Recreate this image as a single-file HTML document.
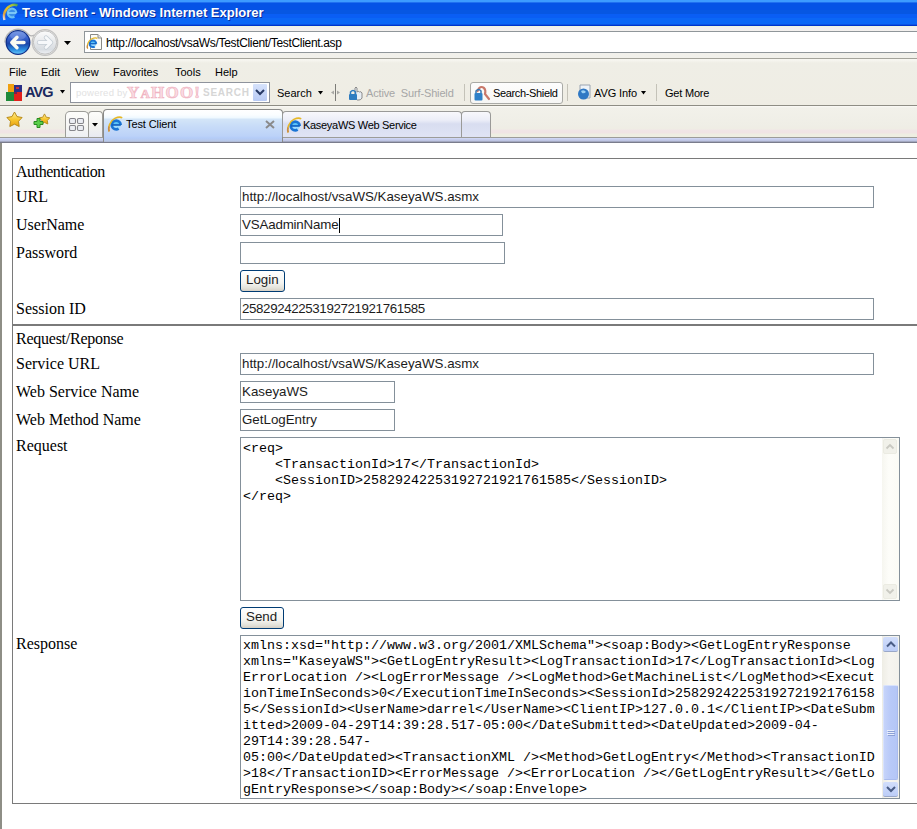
<!DOCTYPE html>
<html><head><meta charset="utf-8">
<style>
*{box-sizing:border-box}
html,body{margin:0;padding:0}
body{width:917px;height:829px;overflow:hidden;position:relative;background:#fff;font-family:"Liberation Sans",sans-serif}
.a{position:absolute}
.t{position:absolute;white-space:pre;line-height:1}
#title{left:0;top:0;width:917px;height:26px;background:linear-gradient(to bottom,#3d9bff 0px,#3d9bff 2px,#2070f0 2px,#2070f0 3px,#0553e6 3px,#0553e6 10px,#0757e2 10px,#0757e2 14px,#0a5ef4 14px,#0a5ef4 18px,#0b67f6 18px,#0b67f6 24px,#0a54e4 24px,#0a54e4 25px,#0034cc 25px,#0034cc 26px)}
#addr{left:0;top:26px;width:917px;height:32px;background:linear-gradient(to bottom,#eef6e0 0px,#eef6e0 1px,#f4eef0 1px,#f3f1ee 5px,#f1f0ea 31px)}
#tool{left:0;top:58px;width:917px;height:48px;background:linear-gradient(to bottom,#f7f6f0 1px,#efeee6 4px,#efede4);border-top:1px solid #a4a39a;border-bottom:1px solid #8e8d84}
#tabs{left:0;top:106px;width:917px;height:37px;background:linear-gradient(to bottom,#fbfaf6 0px,#f2f1ea 2px,#efeee6 20px,#efede4 23px,#f0e6e6 24px,#f0e4e4 27px,#eeeee2 28px,#eeeee2 31px)}
#page{left:0;top:143px;width:917px;height:686px;background:#fff}
.menu{font-size:11px;color:#000;top:67px}
.tb{font-size:11px;color:#000}
.lbl{font-family:"Liberation Serif",serif;font-size:16px;color:#000;left:16px}
.inp{position:absolute;border:1px solid #84909a;background:#fff;height:22px}
.itx{position:absolute;font-size:13.33px;color:#1c1c1c;white-space:pre;line-height:1}
.btn{position:absolute;border:1px solid #003c74;border-radius:3px;background:linear-gradient(to bottom,#fff 0%,#f4f4f0 60%,#e3e2da 85%,#d6d0c5 100%);height:22px}
.mono{font-family:"Liberation Mono",monospace;font-size:13.33px;line-height:16px;white-space:pre;color:#000}
</style></head><body>
<svg width="0" height="0" style="position:absolute"><defs>
<symbol id="ie" viewBox="0 0 16 16">
 <circle cx="9.2" cy="9" r="4.6" fill="#9edcff"/>
 <path d="M4.6 9 A4.6 4.6 0 0 1 13.8 9 Z" fill="#5cc4f8"/>
 <circle cx="9.2" cy="9" r="4.4" fill="none" stroke="#1a74d4" stroke-width="2.8" stroke-dasharray="0 4.2 23.5 0"/>
 <rect x="4.6" y="8.1" width="9.2" height="1.7" fill="#1262c0"/>
 <path d="M2.2 15.4 C0.9 11.5 2.6 5 7.8 2.4 C11 0.9 14 1 15.2 2" fill="none" stroke="#e6b828" stroke-width="1.6"/>
 <path d="M2.2 15.4 C1.4 13.5 1.5 12 2.1 10.5" fill="none" stroke="#c88a48" stroke-width="1.6"/>
</symbol>
</defs></svg>

<!-- title bar -->
<div id="title" class="a"></div>
<svg class="a" style="left:2px;top:3px" width="17" height="18" viewBox="0 0 17 18">
  <defs><linearGradient id="sw" x1="0" y1="1" x2="1" y2="0"><stop offset="0" stop-color="#e8e0f0"/><stop offset="0.2" stop-color="#e0a040"/><stop offset="0.5" stop-color="#e8c020"/><stop offset="0.8" stop-color="#a0c040"/><stop offset="1" stop-color="#40a060"/></linearGradient></defs>
  <circle cx="10" cy="10" r="3.8" fill="#3a8ee8"/>
  <circle cx="10" cy="10" r="4.3" fill="none" stroke="#6cc0f4" stroke-width="2.2" stroke-dasharray="0 4 23 0"/>
  <rect x="5.6" y="9.2" width="8.8" height="1.6" fill="#8ad4fa"/>
  <path d="M2.5 17 C1 12 2.5 6 8 3 C11 1.5 14 1.5 15.5 2.5" fill="none" stroke="url(#sw)" stroke-width="2.4"/>
</svg>
<div class="t" style="left:22px;top:6px;font-size:13px;font-weight:bold;color:#fff;text-shadow:1px 1px 0 #0a2a9a">Test Client - Windows Internet Explorer</div>

<!-- address band -->
<div id="addr" class="a"></div>
<svg class="a" style="left:0px;top:26px" width="64" height="32" viewBox="0 0 64 32">
  <defs>
    <linearGradient id="gb" x1="0" y1="0" x2="0" y2="1"><stop offset="0" stop-color="#5a82e0"/><stop offset="0.3" stop-color="#3a64d0"/><stop offset="0.55" stop-color="#1c44a8"/><stop offset="0.8" stop-color="#2a8ce0"/><stop offset="1" stop-color="#68c8fa"/></linearGradient>
    <linearGradient id="gg" x1="0" y1="0" x2="0" y2="1"><stop offset="0" stop-color="#fcfcfc"/><stop offset="0.5" stop-color="#e6e8ea"/><stop offset="0.8" stop-color="#d8dde2"/><stop offset="1" stop-color="#f0f2f4"/></linearGradient>
  </defs>
  <path d="M4.8 16.5 A13.2 13.2 0 0 1 28.8 8.9 Q31.5 10.8 34.4 9" fill="none" stroke="#b4b4b4" stroke-width="1.3"/>
  <circle cx="45" cy="16.5" r="12.8" fill="none" stroke="#c2c2c2" stroke-width="1.2"/>
  <circle cx="45" cy="16.5" r="11.6" fill="url(#gg)" stroke="#b4b4b4" stroke-width="0.8"/>
  <path d="M39 16.5 L50.5 16.5 M46 11.5 L51 16.5 L46 21.5" fill="none" stroke="#c4ccd4" stroke-width="4.4" stroke-linecap="round" stroke-linejoin="round"/>
  <path d="M39 16.5 L50.5 16.5 M46 11.5 L51 16.5 L46 21.5" fill="none" stroke="#f6f8fa" stroke-width="2.8" stroke-linecap="round" stroke-linejoin="round"/>
  <circle cx="18" cy="16.5" r="11.8" fill="url(#gb)" stroke="#10308a" stroke-width="1.3"/>
  <ellipse cx="18" cy="9.5" rx="8" ry="4.5" fill="#ffffff" opacity="0.18"/>
  <path d="M12 16.5 L24 16.5 M17 11.2 L11.8 16.5 L17 21.8" fill="none" stroke="#fbfbf2" stroke-width="3.4" stroke-linecap="round" stroke-linejoin="round"/>
</svg>
<svg class="a" style="left:64px;top:41px" width="8" height="5"><path d="M0 0 L7 0 L3.5 4Z" fill="#000"/></svg>
<div class="a" style="left:84px;top:31px;width:833px;height:22px;border:1px solid #90969a;border-right:none;background:#fff"></div>
<svg class="a" style="left:88px;top:34px" width="14" height="16" viewBox="0 0 14 16">
  <path d="M2.5 0.5 L10 0.5 L13.5 4 L13.5 15.5 L2.5 15.5Z" fill="#fbfbf8" stroke="#8a8a86" stroke-width="1"/>
  <path d="M10 0.5 L10 4 L13.5 4" fill="#e8e8e4" stroke="#8a8a86" stroke-width="1"/>
</svg>
<svg class="a" style="left:86px;top:37px" width="12" height="12" viewBox="0 0 16 16"><use href="#ie"/></svg>
<div class="t" style="left:106px;top:37px;font-size:12px;color:#000;letter-spacing:-0.33px">http://localhost/vsaWs/TestClient/TestClient.asp</div>

<!-- toolbar: menu + AVG -->
<div id="tool" class="a"></div>
<div class="t menu" style="left:9px">File</div>
<div class="t menu" style="left:41px">Edit</div>
<div class="t menu" style="left:75px">View</div>
<div class="t menu" style="left:113px">Favorites</div>
<div class="t menu" style="left:175px">Tools</div>
<div class="t menu" style="left:215px">Help</div>

<!-- AVG toolbar -->
<svg class="a" style="left:6px;top:84px" width="17" height="17" viewBox="0 0 17 17">
  <rect x="2" y="0" width="6" height="8" fill="#f0a010"/>
  <rect x="0" y="8" width="8" height="9" fill="#1f8a3a"/>
  <rect x="8" y="1" width="8" height="7" fill="#2a2f86"/>
  <rect x="10" y="3" width="3" height="2" fill="#c03040"/>
  <rect x="8" y="8" width="8" height="9" fill="#e0201c"/>
  <rect x="8" y="8" width="3" height="2" fill="#7a2050"/>
</svg>
<div class="t" style="left:25px;top:85px;font-size:14.5px;font-weight:bold;color:#1b2a5e;letter-spacing:-0.9px">AVG</div>
<svg class="a" style="left:60px;top:90px" width="6" height="4"><path d="M0 0 L5 0 L2.5 3.5Z" fill="#000"/></svg>
<div class="a" style="left:70px;top:82px;width:200px;height:21px;border:1px solid #8e939c;background:#fff"></div>
<div class="t" style="left:76px;top:88px;font-size:9.5px;color:#e2e2e2;letter-spacing:0.25px">powered by</div>
<div class="t" style="left:127px;top:84px;font-family:'Liberation Serif',serif;font-size:17px;font-weight:bold;color:#fadce4;-webkit-text-stroke:0.7px #f0b4c2;letter-spacing:1.2px">Y<span style='font-size:13px'>A</span>HOO!</div>
<div class="t" style="left:203px;top:88px;font-size:10px;font-weight:bold;color:#d6d6d6;letter-spacing:0.75px">SEARCH</div>
<div class="a" style="left:253px;top:84px;width:14px;height:17px;background:linear-gradient(to bottom,#d6e2fb,#b9cbf5);border-radius:1px"></div>
<svg class="a" style="left:255px;top:89px" width="10" height="7"><path d="M1 1 L5 5 L9 1" fill="none" stroke="#283a66" stroke-width="2"/></svg>
<div class="t tb" style="left:277px;top:88px">Search</div>
<svg class="a" style="left:318px;top:91px" width="6" height="4"><path d="M0 0 L5 0 L2.5 3.5Z" fill="#000"/></svg>
<svg class="a" style="left:330px;top:84px" width="10" height="17">
  <rect x="5" y="0" width="1" height="17" fill="#7c7c78"/>
  <path d="M1 8.5 L4 6.5 L4 10.5Z" fill="#a8a8a4"/><path d="M10 8.5 L7 6.5 L7 10.5Z" fill="#a8a8a4"/>
</svg>
<svg class="a" style="left:347px;top:84px" width="17" height="17" viewBox="0 0 17 17">
  <path d="M8 14 L8 4 Q9 2 10 4 L10 8 Q11 6.5 12.5 8 Q14 7 15 9 L15 14 Q14 16 12 16 L10 16 Z" fill="#e8eef4" stroke="#8a8a8a" stroke-width="1"/>
  <rect x="2" y="10" width="8" height="6" rx="1" fill="#2e7cc0"/>
  <path d="M3.5 10 L3.5 8 Q6 5 8.5 8 L8.5 10" fill="none" stroke="#2e7cc0" stroke-width="1.5"/>
</svg>
<div class="t tb" style="left:366px;top:88px;color:#a6a6a6;letter-spacing:-0.15px">Active  Surf-Shield</div>
<div class="a" style="left:464px;top:84px;width:1px;height:17px;background:#c4c2b8"></div>
<div class="a" style="left:470px;top:82px;width:93px;height:22px;border:1px solid #a9aaa6;border-radius:3px;background:linear-gradient(to bottom,#fdfdfd,#f6f6f4)"></div>
<svg class="a" style="left:473px;top:85px" width="18" height="17" viewBox="0 0 18 17">
  <path d="M4.5 6 Q7 0 11 3 Q13 5 12 9 L16 14" fill="none" stroke="#c8786a" stroke-width="2.2" stroke-linecap="round"/>
  <rect x="1.5" y="8" width="8" height="7.5" rx="1" fill="#2e80c8"/>
  <path d="M3 8 L3 6 Q5.5 3 8 6 L8 8" fill="none" stroke="#3a78b0" stroke-width="1.5"/>
</svg>
<div class="t tb" style="left:493px;top:88px;letter-spacing:-0.35px">Search-Shield</div>
<div class="a" style="left:567px;top:84px;width:1px;height:17px;background:#c4c2b8"></div>
<svg class="a" style="left:576px;top:84px" width="16" height="17" viewBox="0 0 16 17">
  <path d="M4 1 L14 1 L14 14 L4 14Z" fill="#eef3f8" stroke="#9aa4b0" stroke-width="1"/>
  <circle cx="7.5" cy="10" r="5.5" fill="#2f78c4"/>
  <path d="M5 7 Q8 5 10 8 Q8 10 6 9Z" fill="#9ad0f4"/>
</svg>
<div class="t tb" style="left:594px;top:88px;letter-spacing:-0.1px">AVG Info</div>
<svg class="a" style="left:641px;top:91px" width="6" height="4"><path d="M0 0 L5 0 L2.5 3.5Z" fill="#000"/></svg>
<div class="a" style="left:656px;top:84px;width:1px;height:17px;background:#c4c2b8"></div>
<div class="t tb" style="left:665px;top:88px;letter-spacing:-0.2px">Get More</div>

<!-- tabs band -->
<div id="tabs" class="a"></div>

<!-- tabs -->
<div class="a" style="left:0;top:137px;width:917px;height:1px;background:#9c9c98"></div>
<div class="a" style="left:0;top:138px;width:917px;height:5px;background:linear-gradient(to bottom,#d4dcf8 0px,#c8d0f0 1px,#bcc2e0 3px,#8a8ea0 4px,#8a8ea0 5px)"></div>
<svg class="a" style="left:6px;top:111px" width="18" height="18" viewBox="0 0 18 18">
  <defs><linearGradient id="st" x1="0" y1="0" x2="0" y2="1"><stop offset="0" stop-color="#fff2a0"/><stop offset="0.5" stop-color="#f8c830"/><stop offset="1" stop-color="#e8a010"/></linearGradient></defs>
  <path d="M8.5 1.0 L11.0 5.6 L16.1 6.5 L12.5 10.3 L13.2 15.5 L8.5 13.2 L3.8 15.5 L4.5 10.3 L0.9 6.5 L6.0 5.6Z" fill="url(#st)" stroke="#b88a18" stroke-width="1" stroke-linejoin="round"/>
</svg>
<svg class="a" style="left:33px;top:112px" width="17" height="17" viewBox="0 0 17 17">
  <path d="M11.5 1.9 L13.2 5.2 L16.8 5.8 L14.3 8.4 L14.8 12.0 L11.5 10.4 L8.2 12.0 L8.7 8.4 L6.2 5.8 L9.8 5.2Z" fill="url(#st)" stroke="#b88a18" stroke-width="0.9" stroke-linejoin="round"/>
  <path d="M4 6.5 L7 6.5 L7 9.5 L10 9.5 L10 12.5 L7 12.5 L7 15.5 L4 15.5 L4 12.5 L1 12.5 L1 9.5 L4 9.5Z" fill="#5ad04a" stroke="#2a8a22" stroke-width="1" stroke-linejoin="round"/>
</svg>
<div class="a" style="left:65px;top:111px;width:24px;height:26px;border:1px solid #9c9c98;border-bottom:none;border-radius:5px 5px 0 0;background:linear-gradient(to bottom,#fdfdfb,#f6f6f4 60%,#eef0f4)"></div>
<div class="a" style="left:88px;top:111px;width:15px;height:26px;border:1px solid #9c9c98;border-bottom:none;border-radius:4px 4px 0 0;background:linear-gradient(to bottom,#fdfdfb,#f2f2f0 60%,#e8eaf2)"></div>
<svg class="a" style="left:68px;top:117px" width="17" height="15" viewBox="0 0 17 15">
  <rect x="1.5" y="1.5" width="6" height="5" rx="1.2" fill="#eceef4" stroke="#86868c" stroke-width="1.1"/>
  <rect x="9.5" y="1.5" width="6" height="5" rx="1.2" fill="#eceef4" stroke="#86868c" stroke-width="1.1"/>
  <rect x="1.5" y="8.5" width="6" height="5" rx="1.2" fill="#eceef4" stroke="#86868c" stroke-width="1.1"/>
  <rect x="9.5" y="8.5" width="6" height="5" rx="1.2" fill="#eceef4" stroke="#86868c" stroke-width="1.1"/>
</svg>
<svg class="a" style="left:92px;top:123px" width="7" height="4"><path d="M0 0 L6 0 L3 3.5Z" fill="#000"/></svg>
<div class="a" style="left:103px;top:109px;width:180px;height:33px;border:1px solid #8a8a88;border-bottom:none;border-radius:4px 4px 0 0;background:linear-gradient(to bottom,#ffffff 0px,#fafdff 5px,#eef8ff 8px,#d4e6f8 9px,#c8dcf8 16px,#bcd2f8 26px,#b4ccf8 28px,#b8c8e8 31px,#a8b0c8 32px)"></div>
<div class="a" style="left:0;top:142px;width:917px;height:1px;background:#7a7c8c"></div>
<svg class="a" style="left:107px;top:116px" width="16" height="16"><use href="#ie"/></svg>
<div class="t tb" style="left:126px;top:119px;letter-spacing:-0.1px">Test Client</div>
<svg class="a" style="left:265px;top:120px" width="10" height="9"><path d="M1 1 L9 8 M9 1 L1 8" stroke="#8a8a8a" stroke-width="2"/></svg>
<div class="a" style="left:282px;top:111px;width:180px;height:26px;border:1px solid #9a9a98;border-bottom:none;border-radius:4px 4px 0 0;background:linear-gradient(to bottom,#f8f8fc,#eceef8 8px,#d8ddf0 12px,#dfe3f4 24px)"></div>
<svg class="a" style="left:286px;top:117px" width="16" height="16"><use href="#ie"/></svg>
<div class="t tb" style="left:303px;top:120px;letter-spacing:-0.3px">KaseyaWS Web Service</div>
<div class="a" style="left:461px;top:111px;width:30px;height:26px;border:1px solid #9a9a98;border-bottom:none;border-radius:4px 4px 0 0;background:linear-gradient(to bottom,#f8f8fc,#eceef8 8px,#d8ddf0 12px,#dfe3f4 24px)"></div>

<!-- page -->
<div id="page" class="a"></div>
<div class="a" style="left:0;top:143px;width:2px;height:686px;background:#8e8e86"></div>

<!-- tables -->
<div class="a" style="left:12px;top:158px;width:910px;height:167px;border:1px solid #7a7a7a;border-right:none"></div>
<div class="a" style="left:12px;top:324px;width:910px;height:480px;border:1px solid #7a7a7a;border-right:none;border-top:2px solid #7a7a7a"></div>

<div class="t lbl" style="top:164px;letter-spacing:-0.45px">Authentication</div>
<div class="t lbl" style="top:189px">URL</div>
<div class="t lbl" style="top:217px">UserName</div>
<div class="t lbl" style="top:245px">Password</div>
<div class="t lbl" style="top:301px">Session ID</div>
<div class="t lbl" style="top:331px;letter-spacing:-0.25px">Request/Reponse</div>
<div class="t lbl" style="top:356px">Service URL</div>
<div class="t lbl" style="top:384px">Web Service Name</div>
<div class="t lbl" style="top:412px">Web Method Name</div>
<div class="t lbl" style="top:438px">Request</div>
<div class="t lbl" style="top:636px">Response</div>

<div class="inp" style="left:240px;top:186px;width:634px"></div>
<div class="itx" style="left:242px;top:190px">http://localhost/vsaWS/KaseyaWS.asmx</div>
<div class="inp" style="left:240px;top:214px;width:263px"></div>
<div class="itx" style="left:242px;top:218px;letter-spacing:-0.17px">VSAadminName</div>
<div class="a" style="left:339px;top:218px;width:1px;height:15px;background:#000"></div>
<div class="inp" style="left:240px;top:242px;width:265px"></div>
<div class="btn" style="left:240px;top:270px;width:45px"></div>
<div class="itx" style="left:246px;top:273px">Login</div>
<div class="inp" style="left:240px;top:298px;width:634px"></div>
<div class="itx" style="left:242px;top:302px;letter-spacing:-0.38px">25829242253192721921761585</div>

<div class="inp" style="left:240px;top:353px;width:634px"></div>
<div class="itx" style="left:242px;top:357px">http://localhost/vsaWS/KaseyaWS.asmx</div>
<div class="inp" style="left:240px;top:381px;width:155px"></div>
<div class="itx" style="left:242px;top:385px">KaseyaWS</div>
<div class="inp" style="left:240px;top:409px;width:155px"></div>
<div class="itx" style="left:242px;top:413px">GetLogEntry</div>

<div class="a" style="left:240px;top:437px;width:660px;height:164px;border:1px solid #84909a;background:#fff"></div>
<div class="a mono" style="left:243px;top:441px">&lt;req&gt;
    &lt;TransactionId&gt;17&lt;/TransactionId&gt;
    &lt;SessionID&gt;25829242253192721921761585&lt;/SessionID&gt;
&lt;/req&gt;</div>
<!-- request scrollbar (disabled) -->
<div class="a" style="left:882px;top:438px;width:17px;height:162px;background:linear-gradient(to right,#f6f6f0,#fdfdf9 40%,#fbfbf5)"></div>
<div class="a" style="left:883px;top:439px;width:14px;height:15px;border-radius:2px;background:#f1f1ea;border:1px solid #ebebe2"></div>
<svg class="a" style="left:885px;top:443px" width="10" height="7"><path d="M1.5 5.5 L5 2 L8.5 5.5" fill="none" stroke="#c9c9c2" stroke-width="1.8"/></svg>
<div class="a" style="left:883px;top:584px;width:14px;height:15px;border-radius:2px;background:#f1f1ea;border:1px solid #ebebe2"></div>
<svg class="a" style="left:885px;top:588px" width="10" height="7"><path d="M1.5 1.5 L5 5 L8.5 1.5" fill="none" stroke="#c9c9c2" stroke-width="1.8"/></svg>


<div class="btn" style="left:240px;top:607px;width:44px"></div>
<div class="itx" style="left:246px;top:610px">Send</div>

<div class="a" style="left:240px;top:635px;width:660px;height:164px;border:1px solid #84909a;background:#fff"></div>
<div class="a mono" style="left:243px;top:638px">xmlns:xsd="http://www.w3.org/2001/XMLSchema"&gt;&lt;soap:Body&gt;&lt;GetLogEntryResponse
xmlns="KaseyaWS"&gt;&lt;GetLogEntryResult&gt;&lt;LogTransactionId&gt;17&lt;/LogTransactionId&gt;&lt;Log
ErrorLocation /&gt;&lt;LogErrorMessage /&gt;&lt;LogMethod&gt;GetMachineList&lt;/LogMethod&gt;&lt;Execut
ionTimeInSeconds&gt;0&lt;/ExecutionTimeInSeconds&gt;&lt;SessionId&gt;2582924225319272192176158
5&lt;/SessionId&gt;&lt;UserName&gt;darrel&lt;/UserName&gt;&lt;ClientIP&gt;127.0.0.1&lt;/ClientIP&gt;&lt;DateSubm
itted&gt;2009-04-29T14:39:28.517-05:00&lt;/DateSubmitted&gt;&lt;DateUpdated&gt;2009-04-
29T14:39:28.547-
05:00&lt;/DateUpdated&gt;&lt;TransactionXML /&gt;&lt;Method&gt;GetLogEntry&lt;/Method&gt;&lt;TransactionID
&gt;18&lt;/TransactionID&gt;&lt;ErrorMessage /&gt;&lt;ErrorLocation /&gt;&lt;/GetLogEntryResult&gt;&lt;/GetLo
gEntryResponse&gt;&lt;/soap:Body&gt;&lt;/soap:Envelope&gt;</div>
<!-- response scrollbar -->
<div class="a" style="left:882px;top:636px;width:17px;height:162px;background:linear-gradient(to right,#eeede5,#f6f5f0 40%,#f3f2ec)"></div>
<div class="a" style="left:883px;top:637px;width:15px;height:15px;border-radius:2px;background:linear-gradient(to bottom,#d2defb,#bccdf7);border-bottom:1px solid #9aa8c8"></div>
<svg class="a" style="left:885px;top:640px" width="12" height="8"><path d="M2 6.5 L6 2.5 L10 6.5" fill="none" stroke="#4a5d86" stroke-width="2"/></svg>
<div class="a" style="left:883px;top:685px;width:15px;height:95px;border-radius:2px;background:linear-gradient(to right,#c6d4fa,#b8c9f8 50%,#b4c6f6);border:1px solid #d8e2fc;border-right-color:#a9bbed;border-bottom-color:#a9bbed"></div>
<svg class="a" style="left:887px;top:729px" width="8" height="8"><path d="M0 1.5 H7 M0 3.5 H7 M0 5.5 H7" stroke="#e8eefc" stroke-width="1"/><path d="M1 2.5 H8 M1 4.5 H8 M1 6.5 H8" stroke="#8ca0d6" stroke-width="1"/></svg>
<div class="a" style="left:883px;top:782px;width:15px;height:15px;border-radius:2px;background:linear-gradient(to bottom,#d2defb,#bccdf7);border-bottom:1px solid #9aa8c8"></div>
<svg class="a" style="left:885px;top:785px" width="12" height="8"><path d="M2 2 L6 6 L10 2" fill="none" stroke="#4a5d86" stroke-width="2"/></svg>


</body></html>
